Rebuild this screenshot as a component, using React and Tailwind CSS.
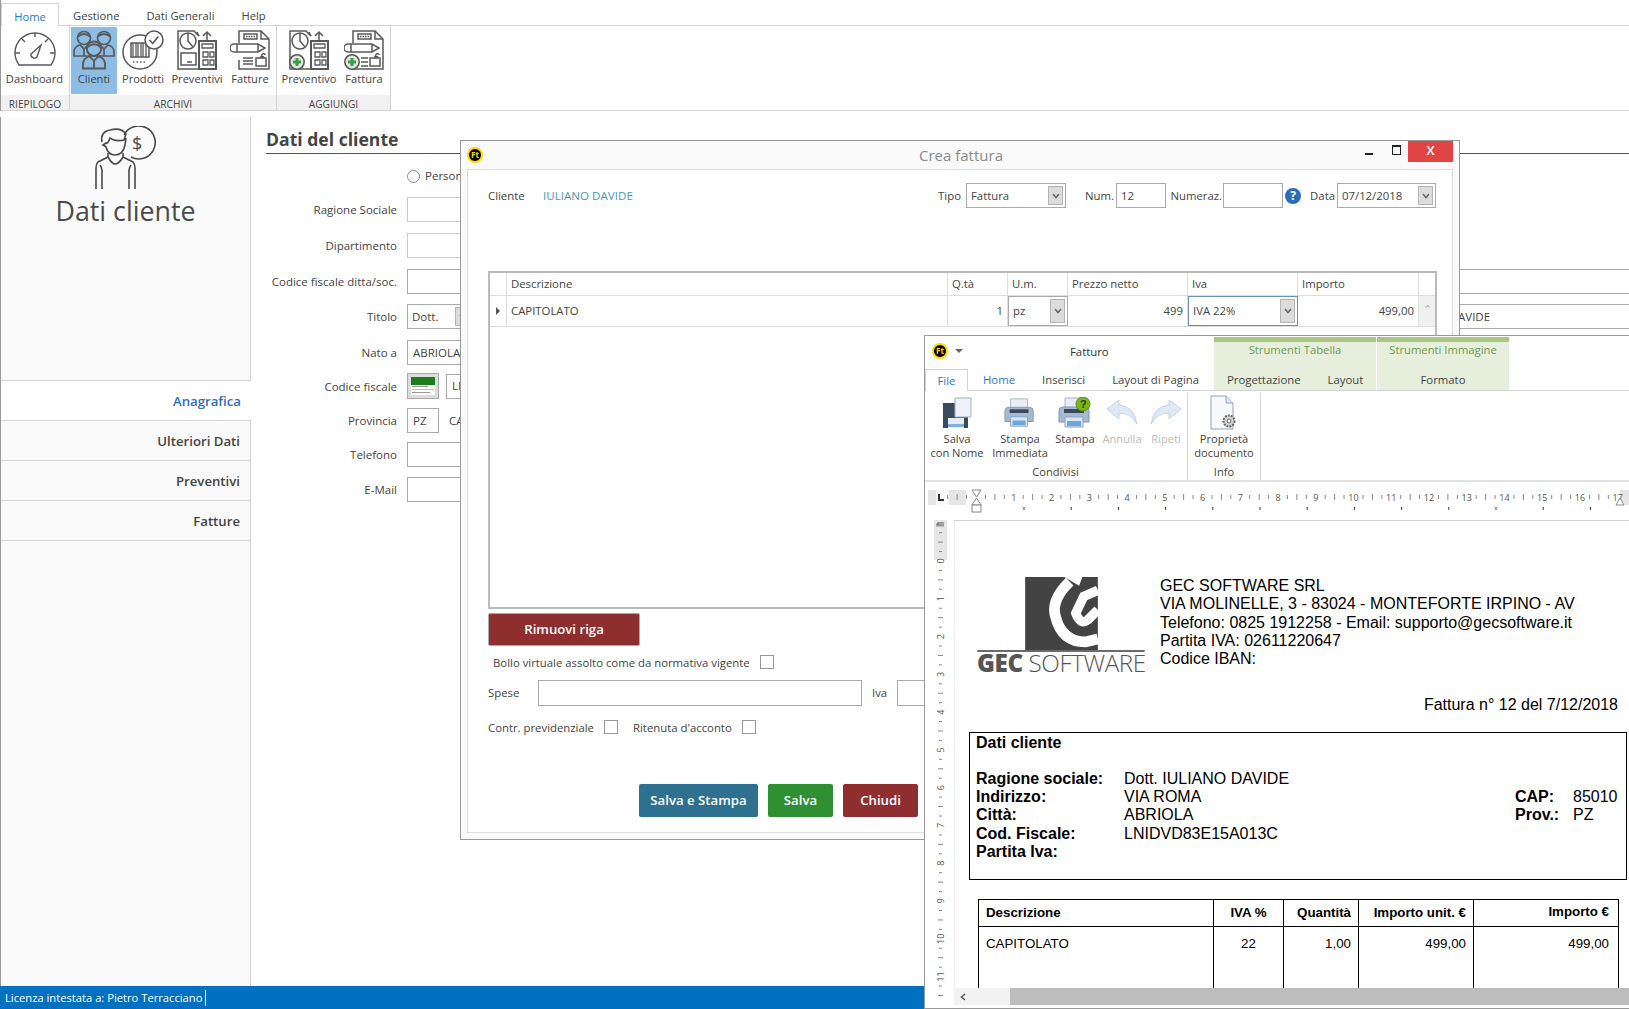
import React from "react";

const I = "#595959";

function Gauge() {
  return (
    <svg width="42" height="36" viewBox="0 0 42 36" fill="none" stroke={I} strokeWidth="1.4">
      <path d="M5 33 Q1 27 1 21 A20 20 0 0 1 41 21 Q41 27 37 33 Z" />
      <path d="M21 1v4M8 7l3 3M34 7l-3 3M1 21h5M41 21h-5" />
      <path d="M17 22 L27 13 L23 25 A3.5 3.5 0 0 1 17 22Z" />
    </svg>
  );
}
function People() {
  const p = (x, y, s) => (
    <g transform={`translate(${x} ${y}) scale(${s})`}>
      <circle cx="10" cy="7" r="6.5" />
      <path d="M3.5 6 Q10 0 16.5 6" />
      <path d="M0 25 V20 Q1 15 6 14 L10 18 L14 14 Q19 15 20 20 V25 Z" />
      <path d="M10 18v7" />
    </g>
  );
  return (
    <svg width="42" height="40" viewBox="0 0 42 40" fill="none" stroke={I} strokeWidth="1.7">
      {p(1, 1, 1)}
      {p(21, 1, 1)}
      <g fill="#8dbde5">{p(10, 11, 1.1)}</g>
    </svg>
  );
}
function Box() {
  return (
    <svg width="42" height="40" viewBox="0 0 42 40" fill="none" stroke={I} strokeWidth="1.5">
      <circle cx="18" cy="22" r="17" />
      <path d="M9 13h18v14H9z" />
      <path d="M11 13v14M14 13v14M16 13v14M19 13v14M21 13v14M24 13v14" strokeWidth="1.3" />
      <path d="M11 32h14" strokeDasharray="1.5 2" />
      <circle cx="32" cy="10" r="9" fill="#fff" />
      <path d="M27.5 10l3.2 3.5 5.5-7" strokeWidth="1.7" />
    </svg>
  );
}
function PlusBadge({ x, y }) {
  return (
    <g>
      <circle cx={x} cy={y} r="7.2" fill="#e4e4e4" stroke={I} strokeWidth="1.6" />
      <path d={`M${x - 4} ${y}h8M${x} ${y - 4}v8`} stroke="#35a045" strokeWidth="3" />
    </g>
  );
}
function Preventivo({ plus }) {
  return (
    <svg width="40" height="40" viewBox="0 0 40 40" fill="none" stroke={I} strokeWidth="1.5">
      <path d="M22 10 V39 H1 V1 H17 L22 6" />
      <circle cx="11" cy="11" r="8" fill="#fff" />
      <path d="M11 3v8l5 6" />
      <rect x="22" y="11" width="17" height="28" fill="#fff" strokeWidth="2" />
      <path d="M25 14h11v4H25zM26 22h5v5h-5zM33 22h4v5h-4zM26 30h5v5h-5zM33 30h4v5h-4z" strokeWidth="1.3" />
      <path d="M30 10V2m-4 4 4-4 4 4M22 6l-2-4" />
      {!plus && <path d="M4 23h15v12H4zM10 32h5" />}
      {plus && <PlusBadge x={8} y={32} />}
    </svg>
  );
}
function Fattura({ plus }) {
  return (
    <svg width="40" height="40" viewBox="0 0 40 40" fill="none" stroke={I} strokeWidth="1.5">
      <path d="M9 13V1H31L39 9V39H9V30" />
      <path d="M31 1v8h8" />
      <path d="M14 4h13v5H14z" />
      <path d="M16 6.5h9" strokeDasharray="1.5 1" />
      <path d="M4 14h24l7 4-7 4H4a4 4 0 0 1 0-8z" fill="#fff" />
      <path d="M28 14v8M7 14v8" />
      <text x="30" y="31" fontFamily="'Liberation Sans',sans-serif" fontWeight="700" fontSize="11" fill={I} stroke="none">€</text>
      {!plus && <path d="M13 28h10M13 31h10M13 34h10" />}
      <path d="M26 28h10v8H26z" fill="#fff" />
      {plus && <path d="M17 28h7M17 32h7M17 36h7" />}
      {plus && <PlusBadge x={8} y={32} />}
    </svg>
  );
}
function ClientBig() {
  return (
    <svg width="62" height="66" viewBox="0 0 62 66" fill="none" stroke="#4a4a4a" strokeWidth="1.6">
      <path d="M29 9 A16.5 16.5 0 1 1 36 31" />
      <text x="37" y="24" fontFamily="'Open Sans',sans-serif" fontSize="18" fill="#4a4a4a" stroke="none">$</text>
      <path d="M7 16 Q5 6 15 4 Q26 1 31 8 L29 14 Q20 16 15 12 Q13 18 11 17 L8 19 Q10 20 11 21 Q13 29 20 29 Q28 29 30 19 L31 12" />
      <path d="M13 27 V31 Q17 38 20 38 Q24 38 28 31 V27" />
      <path d="M13 31 L3 36 Q1 38 1 42 V63 M28 31 L38 36 Q40 38 40 42 V63" />
      <path d="M7 63 V44 Q7 42 5 39 M34 63 V44 Q34 42 36 39" />
    </svg>
  );
}
function FtLogo({ s = 16 }) {
  return (
    <span style={{ width: s, height: s }} className="flex items-center justify-center rounded-full bg-black border-2 border-[#ffd800] shrink-0">
      <span className="text-[8px] leading-none font-bold text-[#ffd800]">Ft</span>
    </span>
  );
}
function Chevron({ c = "#666" }) {
  return (
    <svg width="8" height="6" viewBox="0 0 8 6" fill="none" stroke={c} strokeWidth="1.5">
      <path d="M1 1l3 3.5L7 1" />
    </svg>
  );
}
function Select({ text, w, h = "h-[25px]", accent }) {
  return (
    <div className={`${w} ${h} flex items-center justify-between border ${accent ? "border-[#6d8fb5]" : "border-[#aaa]"} bg-white pl-[4px] pr-[2px] shrink-0`}>
      <span className="truncate">{text}</span>
      <span className="w-[15px] h-[calc(100%-4px)] flex items-center justify-center bg-[#dcdcdc] border border-[#b5b5b5] shrink-0">
        <Chevron />
      </span>
    </div>
  );
}

function RibBtn({ w, label, active, children }) {
  return (
    <div className={`${w} h-[67px] flex flex-col items-center ${active ? "bg-[#8dbde5]" : ""}`}>
      <div className="h-[42px] pt-[3px] flex items-center justify-center">{children}</div>
      <div className="leading-[16px] mt-[2px] whitespace-nowrap">{label}</div>
    </div>
  );
}

function MainRibbon() {
  const strip = "h-[15px] bg-[#f1f1f1] text-center text-[10.2px] leading-[18px]";
  return (
    <div className="h-[111px] border-l border-[#999] text-[11.1px]">
      <div className="h-[26px] flex items-end border-b border-[#d4d4d4] text-[11.2px]">
        <div className="w-[58px] h-[23px] -mb-px bg-white border border-b-0 border-[#d4d4d4] text-center leading-[25px] text-[#1f7ad1]">Home</div>
        <div className="ml-[14px] h-[22px] leading-[26px]">Gestione</div>
        <div className="ml-[27px] h-[22px] leading-[26px]">Dati Generali</div>
        <div className="ml-[27px] h-[22px] leading-[26px]">Help</div>
      </div>
      <div className="flex h-[85px] border-b border-[#d4d4d4] w-full">
        <div className="flex flex-col w-[69px] border-r border-[#d4d4d4]">
          <div className="flex flex-1 pt-px">
            <RibBtn w="w-[67px]" label="Dashboard"><Gauge /></RibBtn>
          </div>
          <div className={strip}>RIEPILOGO</div>
        </div>
        <div className="flex flex-col w-[207px] border-r border-[#d4d4d4]">
          <div className="flex flex-1 pt-px pl-px">
            <RibBtn w="w-[46px]" label="Clienti" active><People /></RibBtn>
            <RibBtn w="w-[52px]" label="Prodotti"><Box /></RibBtn>
            <RibBtn w="w-[56px]" label="Preventivi"><Preventivo /></RibBtn>
            <RibBtn w="w-[50px]" label="Fatture"><Fattura /></RibBtn>
          </div>
          <div className={strip}>ARCHIVI</div>
        </div>
        <div className="flex flex-col w-[114px] border-r border-[#d4d4d4]">
          <div className="flex flex-1 pt-px">
            <RibBtn w="w-[64px]" label="Preventivo"><Preventivo plus /></RibBtn>
            <RibBtn w="w-[46px]" label="Fattura"><Fattura plus /></RibBtn>
          </div>
          <div className={strip}>AGGIUNGI</div>
        </div>
      </div>
    </div>
  );
}

function Sidebar() {
  const tab = "h-[40px] pr-[10px] pt-[2px] flex items-center justify-end border-b border-[#d4d4d4] text-[13.2px] font-semibold";
  return (
    <div className="w-[251px] shrink-0 flex flex-col border-l border-[#999] bg-[#fafafa]">
      <div className="h-[264px] flex flex-col items-center border-r border-b border-[#d4d4d4] pt-[9px]">
        <ClientBig />
        <div className="text-[26.8px] leading-[36px] mt-[1px] text-[#4a4a4a]">Dati cliente</div>
      </div>
      <div className={`${tab} bg-white text-[#2f6fc0]`}>Anagrafica</div>
      <div className={`${tab} border-r`}>Ulteriori Dati</div>
      <div className={`${tab} border-r`}>Preventivi</div>
      <div className={`${tab} border-r`}>Fatture</div>
      <div className="flex-1 border-r border-[#d4d4d4]" />
    </div>
  );
}

function FormRow({ label, mt, children }) {
  return (
    <div className={`flex items-center ${mt}`}>
      <div className="w-[131px] text-right shrink-0 whitespace-nowrap pt-[1px]">{label}</div>
      <div className="ml-[10px] flex items-center flex-1">{children}</div>
    </div>
  );
}

function Form() {
  const inp = "h-[25px] border border-[#aaa] bg-white flex items-center px-[5px] whitespace-nowrap";
  return (
    <div className="flex-1 pl-[15px] pt-[12px] overflow-hidden text-[11.5px]">
      <div className="h-[25px] text-[17.6px] leading-[20px] font-bold text-[#444]">Dati del cliente</div>
      <div className="h-[1px] bg-[#555] mt-[-1px]" />
      <div className="flex items-center h-[14px] mt-[15px] ml-[141px]">
        <span className="w-[13px] h-[13px] rounded-full border border-[#888]" />
        <span className="ml-[5px] whitespace-nowrap">Persona fisica</span>
      </div>
      <FormRow label="Ragione Sociale" mt="mt-[14px]"><div className={`${inp} w-[300px] border-[#ccc]`} /></FormRow>
      <FormRow label="Dipartimento" mt="mt-[11px]"><div className={`${inp} w-[300px] border-[#ccc]`} /></FormRow>
      <FormRow label="Codice fiscale ditta/soc." mt="mt-[11px]"><div className={`${inp} w-[1300px]`} /></FormRow>
      <FormRow label="Titolo" mt="mt-[10px]">
        <Select text="Dott." w="w-[66px]" />
        <div className={`${inp} ml-[917px] w-[300px] pl-[10px]`}>IULIANO DAVIDE</div>
      </FormRow>
      <FormRow label="Nato a" mt="mt-[11px]"><div className={`${inp} w-[300px]`}>ABRIOLA</div></FormRow>
      <FormRow label="Codice fiscale" mt="mt-[8px]">
        <div className="w-[32px] h-[26px] bg-[#ddd] border border-[#aaa] p-[3px] flex flex-col">
          <div className="h-[8px] bg-[#1a7f1a]" />
          <div className="flex-1 bg-white flex flex-col gap-[2px] p-[1px]">
            <div className="h-[1px] w-[16px] bg-[#999]" />
            <div className="h-[1px] w-[22px] bg-[#bbb]" />
            <div className="h-[1px] w-[18px] bg-[#999]" />
          </div>
        </div>
        <div className={`${inp} ml-[7px] w-[200px]`}>LNIDVD83E15A013C</div>
      </FormRow>
      <FormRow label="Provincia" mt="mt-[9px]">
        <div className={`${inp} w-[32px]`}>PZ</div>
        <span className="ml-[10px]">CAP</span>
      </FormRow>
      <FormRow label="Telefono" mt="mt-[9px]"><div className={`${inp} w-[300px]`} /></FormRow>
      <FormRow label="E-Mail" mt="mt-[10px]"><div className={`${inp} w-[300px]`} /></FormRow>
    </div>
  );
}

function GridCell({ className = "", children }) {
  return <div className={`flex items-center border-r border-[#e0e0e0] px-[4px] ${className}`}>{children}</div>;
}

function CreaFattura() {
  const chk = "w-[14px] h-[14px] border border-[#999] bg-white shrink-0";
  const cols = "grid grid-cols-[17px_441px_60px_60px_120px_110px_121px_1fr]";
  return (
    <div className="absolute left-[460px] top-[140px] w-[1000px] h-[700px] bg-[#fafafa] border border-[#999] px-[6px] pb-[6px] flex flex-col text-[11.35px] text-[#444]">
      <div className="h-[28px] flex items-center relative shrink-0">
        <FtLogo />
        <div className="flex-1 text-center text-[#8a8a8a] text-[15px] pl-[74px] pt-[1px]">Crea fattura</div>
        <div className="flex items-start h-full">
          <div className="w-[8px] h-[2px] bg-[#222] mt-[12px]" />
          <div className="w-[9px] h-[10px] border border-[#222] border-t-2 ml-[19px] mt-[4px]" />
          <div className="w-[45px] h-[21px] ml-[7px] bg-[#e04444] text-white text-center leading-[19px] font-semibold text-[13px]">X</div>
        </div>
      </div>
      <div className="flex-1 border border-[#dcdcdc] bg-white pl-[20px] pr-[16px] pt-[13px] flex flex-col min-h-0">
        <div className="h-[25px] flex items-center shrink-0">
          <span className="w-[55px]">Cliente</span>
          <span className="text-[#4b98ad] text-[11.6px]">IULIANO DAVIDE</span>
          <span className="ml-auto">Tipo</span>
          <div className="ml-[5px]"><Select text="Fattura" w="w-[100px]" /></div>
          <span className="w-[50px] text-right pr-[2px]">Num.</span>
          <div className="w-[50px] h-[25px] border border-[#aaa] flex items-center pl-[4px]">12</div>
          <span className="w-[57px] text-right pr-[1px]">Numeraz.</span>
          <div className="w-[60px] h-[25px] border border-[#aaa]" />
          <div className="ml-[2px] w-[16px] h-[16px] rounded-full bg-[#2a6ebb] text-white text-center font-bold text-[12px] leading-[16px]">?</div>
          <span className="w-[36px] text-right pr-[2px]">Data</span>
          <Select text="07/12/2018" w="w-[99px]" />
        </div>
        <div className="mt-[63px] h-[338px] w-[949px] border-2 border-[#bbb] bg-white shrink-0">
          <div className={`${cols} h-[23px] border-b border-[#ddd]`}>
            <GridCell />
            <GridCell>Descrizione</GridCell>
            <GridCell>Q.tà</GridCell>
            <GridCell>U.m.</GridCell>
            <GridCell>Prezzo netto</GridCell>
            <GridCell>Iva</GridCell>
            <GridCell>Importo</GridCell>
            <div />
          </div>
          <div className={`${cols} h-[31px] border-b border-[#ddd]`}>
            <GridCell className="justify-center !px-0">
              <span className="border-y-[4px] border-l-[4px] border-y-transparent border-l-[#555]" />
            </GridCell>
            <GridCell>CAPITOLATO</GridCell>
            <GridCell className="justify-end">1</GridCell>
            <Select text="pz" w="w-full" h="h-full" />
            <GridCell className="justify-end">499</GridCell>
            <Select text="IVA 22%" w="w-full" h="h-full" accent />
            <GridCell className="justify-end">499,00</GridCell>
            <div className="bg-[#f0f0f0] text-center text-[#aaa] leading-[26px]">⌃</div>
          </div>
        </div>
        <div className="mt-[4px] w-[152px] h-[33px] shrink-0 rounded-[2px] bg-[#8f2e2e] border border-[#aaa] text-white font-semibold text-[13.2px] flex items-center justify-center">Rimuovi riga</div>
        <div className="mt-[9px] ml-[5px] h-[14px] flex items-center shrink-0">
          <span className="whitespace-nowrap">Bollo virtuale assolto come da normativa vigente</span>
          <span className={`${chk} ml-[10px]`} />
        </div>
        <div className="mt-[11px] flex items-center h-[26px] shrink-0">
          <span className="w-[50px]">Spese</span>
          <div className="w-[324px] h-[26px] border border-[#aaa]" />
          <span className="ml-[10px]">Iva</span>
          <div className="ml-[10px] w-[100px] h-[26px] border border-[#aaa]" />
        </div>
        <div className="mt-[14px] flex items-center h-[14px] shrink-0">
          <span>Contr. previdenziale</span>
          <span className={`${chk} ml-[10px]`} />
          <span className="ml-[15px]">Ritenuta d'acconto</span>
          <span className={`${chk} ml-[10px]`} />
        </div>
        <div className="mt-[50px] flex h-[33px] ml-[151px] gap-[10px] text-white font-semibold text-[13.2px] shrink-0">
          <div className="w-[119px] rounded-[2px] bg-[#2e7090] flex items-center justify-center pt-[1px]">Salva e Stampa</div>
          <div className="w-[65px] rounded-[2px] bg-[#2f8f33] flex items-center justify-center pt-[1px]">Salva</div>
          <div className="w-[75px] rounded-[2px] bg-[#8f2e2e] flex items-center justify-center pt-[1px]">Chiudi</div>
        </div>
      </div>
    </div>
  );
}

function SaveIcon() {
  return (
    <svg width="30" height="32" viewBox="0 0 30 32">
      <path d="M1 6h25v25H1z" fill="#3c4a5e" />
      <path d="M6 21h16v10H6z" fill="#e6edf5" />
      <path d="M6 27h16v3H6z" fill="#7fb0de" />
      <path d="M13 1h16v19H13z" fill="#eef2f8" stroke="#9fb0c8" />
    </svg>
  );
}
function PrinterIcon({ q }) {
  return (
    <svg width={q ? 34 : 32} height="32" viewBox="0 0 34 32">
      <path d="M7 1h18v12H7z" fill="#e9edf5" stroke="#a7b5cb" />
      <path d="M1 14 Q1 10 5 10H27Q31 10 31 14V25H1Z" fill="#a5b9d3" stroke="#8096b4" />
      <path d="M6 12h20v4H6z" fill="#3c4a5e" />
      <path d="M7 20h18v10H7z" fill="#d8e6f4" stroke="#8aa3c4" />
      <path d="M9 24h14v5H9z" fill="#6ea6dc" />
      {q && <circle cx="25" cy="7" r="7" fill="#7cb518" stroke="#5a8c0f" />}
      {q && <text x="22" y="11" fontFamily="'Liberation Sans',sans-serif" fontSize="11" fontWeight="700" fill="#26400a">?</text>}
    </svg>
  );
}
function UndoIcon({ flip }) {
  return (
    <svg width="32" height="28" viewBox="0 0 32 28" style={flip ? { transform: "scaleX(-1)" } : undefined}>
      <path d="M1 10 L13 1 V6 Q28 7 31 25 Q25 14 13 14 V20Z" fill="#dfe9f4" stroke="#c5d4e6" />
    </svg>
  );
}
function DocGear() {
  return (
    <svg width="28" height="36" viewBox="0 0 28 36">
      <path d="M1 1H16L23 8V34H1Z" fill="#f8f9fc" stroke="#8ea2c4" />
      <path d="M16 1V8H23" fill="#dfe6f2" stroke="#8ea2c4" />
      <circle cx="19" cy="26" r="5.5" fill="#d5d5d5" stroke="#666" strokeDasharray="2 1" strokeWidth="2" />
      <circle cx="19" cy="26" r="2" fill="#fff" stroke="#666" />
    </svg>
  );
}

function RulerH() {
  const cm = 37.75;
  const ticks = [];
  for (let n = -1; n < 17; n++) {
    for (let k = 1; k < 4; k++) {
      const x = 50 + n * cm + (k * cm) / 4;
      ticks.push(<path key={`${n}-${k}`} d={`M${x} ${k === 2 ? 9 : 10}v${k === 2 ? 6 : 4}`} stroke="#888" strokeWidth="1" />);
    }
  }
  const nums = Array.from({ length: 17 }, (_, i) => i + 1);
  const marks = Array.from({ length: 13 }, (_, i) => i);
  return (
    <svg width="705" height="35" viewBox="0 0 705 35" className="block" fontFamily="'Open Sans',sans-serif">
      <rect x="2" y="5" width="703" height="15" fill="#fff" />
      <rect x="2" y="5" width="38" height="15" fill="#e6e6e6" />
      <rect x="694" y="5" width="11" height="15" fill="#e6e6e6" />
      <rect x="10" y="5" width="13" height="15" fill="#fafafa" />
      <path d="M13 9v6h5" fill="none" stroke="#333" strokeWidth="2" />
      {ticks}
      {nums.map((n) => (
        <text key={n} x={50 + n * cm} y="16" fontSize="9" textAnchor="middle" fill="#555">{n}</text>
      ))}
      {marks.map((i) => (
        <path key={i} d={`M${98 + i * 47.2} 22v3`} stroke="#333" />
      ))}
      <path d="M46 5h9l-4.5 7zM46 20h9l-4.5-7z" fill="#fff" stroke="#888" />
      <rect x="46" y="20" width="9" height="7" fill="#fff" stroke="#888" />
      <path d="M690 20l4-7 4 7z" fill="#fff" stroke="#888" />
    </svg>
  );
}
function RulerV() {
  const cm = 37.78;
  const ticks = [];
  for (let n = -2; n < 12; n++) {
    for (let k = 1; k < 4; k++) {
      const y = 41 + n * cm + (k * cm) / 4;
      ticks.push(<path key={`${n}-${k}`} d={`M${k === 2 ? 4 : 5} ${y}h${k === 2 ? 5 : 3}`} stroke="#888" />);
    }
  }
  return (
    <svg width="13" height="484" viewBox="0 0 13 484" className="block" fontFamily="'Open Sans',sans-serif">
      <rect width="13" height="484" fill="#fff" />
      <rect width="13" height="40" fill="#e6e6e6" />
      {ticks}
      <path d="M2 5h8" stroke="#999" strokeWidth="3" />
      {Array.from({ length: 13 }, (_, i) => i - 1).map((n) => (
        <text key={n} transform={`translate(9.5 ${41 + n * cm}) rotate(-90)`} textAnchor="middle" fontSize="9" fill="#555">{Math.abs(n)}</text>
      ))}
    </svg>
  );
}

function GecLogo() {
  return (
    <div className="w-[168px] shrink-0">
      <svg width="168" height="75" viewBox="22 20 500 224" className="block">
        <rect x="165" y="20" width="217" height="220" fill="#434343" />
        <path d="M282 20 L326 46 L336 20 Z" fill="#fff" />
        <path d="M298 34 Q240 90 256 140 Q275 214 345 214 L382 205" fill="none" stroke="#fff" strokeWidth="32" />
        <path d="M382 60 L340 78 L316 128 Q330 165 352 148 L382 118" fill="none" stroke="#fff" strokeWidth="28" />
        <rect x="22" y="238" width="500" height="6" fill="#6b6b6b" />
      </svg>
      <div className="text-[24.2px] leading-[22px] text-[#555] whitespace-nowrap font-['Open_Sans'] tracking-[-0.4px]">
        <span className="font-extrabold">GEC</span> <span className="font-light">SOFTWARE</span>
      </div>
    </div>
  );
}

function Invoice() {
  const lab = "font-bold w-[148px] shrink-0";
  const cell = "border-r border-black px-[7px] flex items-center";
  const cols = "grid grid-cols-[235px_70px_75px_115px_1fr]";
  return (
    <div className="flex-1 h-full overflow-hidden border-l border-[#f0f0f0] pt-[56px] text-[16px] leading-[18.3px] text-black font-['Liberation_Sans']">
      <div className="flex pl-[22px]">
        <GecLogo />
        <div className="ml-[15px] whitespace-nowrap">
          <div>GEC SOFTWARE SRL</div>
          <div>VIA MOLINELLE, 3 - 83024 - MONTEFORTE IRPINO - AV</div>
          <div>Telefono: 0825 1912258 - Email: supporto@gecsoftware.it</div>
          <div>Partita IVA: 02611220647</div>
          <div>Codice IBAN:</div>
        </div>
      </div>
      <div className="w-[663px] text-right mt-[22px]">Fattura n° 12 del 7/12/2018</div>
      <div className="ml-[14px] w-[658px] h-[148px] border border-black mt-[18px] pl-[6px] pt-[1px]">
        <div className="font-bold">Dati cliente</div>
        <div className="mt-[17.3px]">
          <div className="flex"><span className={lab}>Ragione sociale:</span><span>Dott. IULIANO DAVIDE</span></div>
          <div className="flex"><span className={lab}>Indirizzo:</span><span className="flex-1">VIA ROMA</span><span className="font-bold w-[58px]">CAP:</span><span className="w-[53px]">85010</span></div>
          <div className="flex"><span className={lab}>Città:</span><span className="flex-1">ABRIOLA</span><span className="font-bold w-[58px]">Prov.:</span><span className="w-[53px]">PZ</span></div>
          <div className="flex"><span className={lab}>Cod. Fiscale:</span><span>LNIDVD83E15A013C</span></div>
          <div className="flex"><span className={lab}>Partita Iva:</span></div>
        </div>
      </div>
      <div className="ml-[23px] w-[641px] border-x border-t border-black mt-[19px] text-[13.3px]">
        <div className={`${cols} h-[27px] border-b border-black font-bold pb-[2px]`}>
          <div className={`${cell} -mb-[2px]`}>Descrizione</div>
          <div className={`${cell} -mb-[2px] justify-center`}>IVA %</div>
          <div className={`${cell} -mb-[2px] justify-end`}>Quantità</div>
          <div className={`${cell} -mb-[2px] justify-end`}>Importo unit. €</div>
          <div className="px-[9px] flex items-center justify-end">Importo €</div>
        </div>
        <div className={`${cols} h-[70px]`}>
          <div className={`${cell} !items-start pt-[8px]`}>CAPITOLATO</div>
          <div className={`${cell} !items-start pt-[8px] justify-center`}>22</div>
          <div className={`${cell} !items-start pt-[8px] justify-end`}>1,00</div>
          <div className={`${cell} !items-start pt-[8px] justify-end`}>499,00</div>
          <div className="px-[9px] pt-[8px] text-right">499,00</div>
        </div>
      </div>
    </div>
  );
}

function DocBtn({ w, lines, children, dim }) {
  return (
    <div className={`${w} flex flex-col items-center ${dim ? "text-[#bbb]" : ""}`}>
      <div className="h-[39px] flex items-center justify-center">{children}</div>
      <div className="text-center leading-[14px] whitespace-nowrap">
        {lines.map((l) => <div key={l}>{l}</div>)}
      </div>
    </div>
  );
}

function Fatturo() {
  const tabs = "text-[11.35px]";
  return (
    <div className="absolute left-[924px] top-[335px] w-[720px] h-[674px] bg-white border-l border-t border-b border-[#999] flex flex-col text-[11.1px] text-[#444]">
      <div className={`h-[55px] border-b border-[#d4d4d4] flex shrink-0 ${tabs}`}>
        <div className="w-[288px] flex flex-col">
          <div className="h-[33px] flex items-center pl-[7px] pb-[2px] relative">
            <FtLogo />
            <span className="ml-[7px] border-x-[4px] border-t-[4px] border-x-transparent border-t-[#666] w-0 h-0" />
            <span className="ml-[107px] text-[#333]">Fatturo</span>
          </div>
          <div className="h-[22px] flex items-end">
            <div className="w-[43px] h-[22px] -mb-px bg-white border border-b-0 border-[#d4d4d4] text-center leading-[21px] text-[#1f7ad1]">File</div>
            <div className="ml-[15px] h-[20px] leading-[19px] text-[#1f7ad1]">Home</div>
            <div className="ml-[27px] h-[20px] leading-[19px]">Inserisci</div>
            <div className="ml-[27px] h-[20px] leading-[19px] whitespace-nowrap">Layout di Pagina</div>
          </div>
        </div>
        <div className="w-[162px] ml-px bg-[#e6efdc] border-t-[5px] border-[#a9c682] mt-[1px] flex flex-col">
          <div className="text-center h-[24px] text-[#6f9a4e] text-[11.25px]">Strumenti Tabella</div>
          <div className="flex flex-1 items-center pl-[13px] pt-[4px]">
            <span>Progettazione</span>
            <span className="ml-[27px]">Layout</span>
          </div>
        </div>
        <div className="w-[132px] ml-px bg-[#e6efdc] border-t-[5px] border-[#a9c682] mt-[1px] flex flex-col">
          <div className="text-center h-[24px] text-[#6f9a4e] text-[11.25px]">Strumenti Immagine</div>
          <div className="flex flex-1 items-center justify-center pt-[4px]">Formato</div>
        </div>
      </div>
      <div className="h-[91px] shrink-0 border-b-2 border-[#e2e2e2] flex">
        <div className="w-[263px] flex flex-col border-r border-[#d4d4d4] mt-[2px]">
          <div className="flex flex-1">
            <DocBtn w="w-[64px]" lines={["Salva", "con Nome"]}><SaveIcon /></DocBtn>
            <DocBtn w="w-[62px]" lines={["Stampa", "Immediata"]}><PrinterIcon /></DocBtn>
            <DocBtn w="w-[48px]" lines={["Stampa"]}><PrinterIcon q /></DocBtn>
            <DocBtn w="w-[46px]" lines={["Annulla"]} dim><UndoIcon /></DocBtn>
            <DocBtn w="w-[42px]" lines={["Ripeti"]} dim><UndoIcon flip /></DocBtn>
          </div>
          <div className="text-center leading-[14px] pb-[1px] pr-[1px]">Condivisi</div>
        </div>
        <div className="w-[73px] flex flex-col border-r border-[#d4d4d4] mt-[2px]">
          <div className="flex flex-1">
            <DocBtn w="w-[72px]" lines={["Proprietà", "documento"]}><DocGear /></DocBtn>
          </div>
          <div className="text-center leading-[14px] pb-[1px]">Info</div>
        </div>
      </div>
      <div className="shrink-0 h-[38px] pt-[3px] pl-[1px]"><RulerH /></div>
      <div className="flex-1 min-h-0 flex">
        <div className="w-[29px] shrink-0 pl-[9px]">
          <RulerV />
        </div>
        <div className="flex-1 min-w-0 flex flex-col">
          <div className="h-[1px] bg-[#cfcfcf] shrink-0" />
          <div className="flex-1 min-h-0"><Invoice /></div>
          <div className="h-[17px] shrink-0 flex items-center bg-[#f2f2f2]">
            <div className="w-[56px] flex justify-start pl-[6px]">
              <svg width="6" height="8" viewBox="0 0 6 8" fill="none" stroke="#555" strokeWidth="1.5"><path d="M5 1L1.5 4L5 7" /></svg>
            </div>
            <div className="flex-1 h-full bg-[#bdbdbd]" />
          </div>
          <div className="h-[3px] shrink-0" />
        </div>
      </div>
    </div>
  );
}

export default function App() {
  return (
    <div className="relative w-[1629px] h-[1009px] overflow-hidden bg-white flex flex-col text-[11.4px] text-[#444] font-['Open_Sans',sans-serif]">
      <MainRibbon />
      <div className="flex flex-1 min-h-0 pt-[6px]">
        <Sidebar />
        <Form />
      </div>
      <div className="h-[23px] shrink-0 bg-[#0071c1] text-white flex items-center pl-[5px] text-[11.2px]">
        <span className="pr-[3px] border-r border-white leading-[16px]">Licenza intestata a: Pietro Terracciano</span>
      </div>
      <CreaFattura />
      <Fatturo />
    </div>
  );
}
